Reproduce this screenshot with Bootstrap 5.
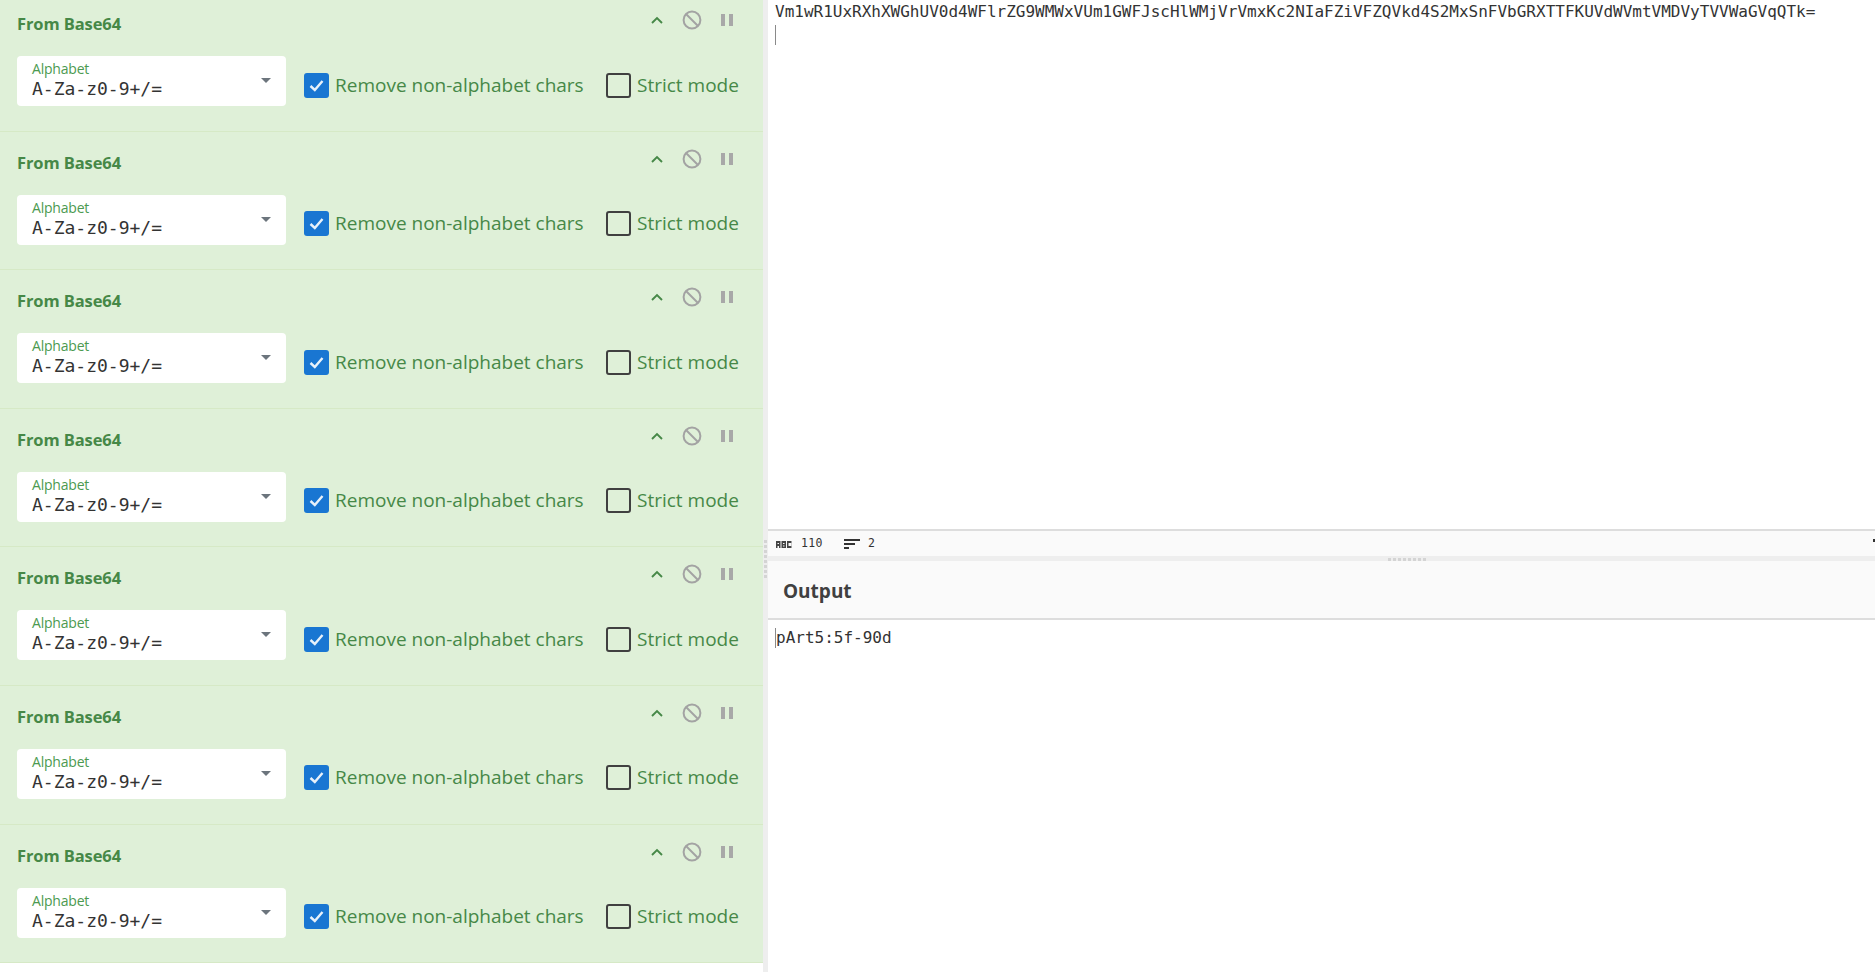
<!DOCTYPE html>
<html lang="en">
<head>
<meta charset="utf-8">
<title>CyberChef</title>
<link href="https://cdn.jsdelivr.net/npm/bootstrap@5.3.0/dist/css/bootstrap.min.css" rel="stylesheet">
<style>
html,body{height:100%;overflow:hidden;background:#fff}
body{font-family:"Open Sans","Noto Sans",sans-serif;color:#333}
.chef-app{height:972px;width:1875px}
.recipe-pane{width:763px;height:972px;overflow:hidden;flex:none}
.recipe-list{margin-top:-7px}
.op-row{height:138.6px;background:#dff0d8;border-bottom:1px solid #d6e9c6;color:#468847;padding:0 17px;flex:none}
.op-head{height:63px;padding-top:15px}
.op-title{font-size:16.5px;font-weight:700;letter-spacing:-.1px;color:#468847;line-height:24px;margin-top:4px}
.op-tools{margin-right:2px}
.op-tool{width:35px;height:24px}
.alpha-box{width:269px;height:50px;background:#fff;border-radius:4px;padding:4px 15px;position:relative;flex:none}
.alpha-label{font-size:14px;line-height:17px;color:#4c9a50;letter-spacing:-.2px}
.alpha-value{font-family:"DejaVu Sans Mono",monospace;font-size:18px;line-height:23px;color:#333}
.alpha-caret{position:absolute;right:15px;top:22px;width:0;height:0;border-left:5px solid transparent;border-right:5px solid transparent;border-top:5px solid #6c757d}
.tick-box{width:25px;height:25px;border-radius:3px;flex:none;margin-right:6px}
.tick-on{background:#1976d2}
.tick-off{border:2px solid #404040}
.tick-text{font-size:19px;line-height:25px;color:#468847;white-space:nowrap}
.tick-wrap{padding-top:8px}
.tick-wrap-a{margin-left:18px;width:302px}
.io-gutter{width:5px;background:#eee;flex:none}
.grip-v{width:3px;height:38px;margin-top:540px;margin-left:1px;background:repeating-linear-gradient(to bottom,#d4d4d4 0 3px,transparent 3px 5px)}
.io-main{min-width:0}
.input-area{height:529px;padding:2px 7px;overflow:hidden;flex:none}
.mono-line{font-family:"DejaVu Sans Mono",monospace;font-size:16px;line-height:19px;color:#333;white-space:nowrap;height:19px}
.txt-cursor{width:1px;height:20px;background:#8a8a8a;margin-top:4px}
.stat-bar{height:27px;background:#fafafa;border-top:2px solid #ddd;padding:1px 8px 0;font-family:"DejaVu Sans Mono",monospace;font-size:11.5px;color:#333;flex:none;overflow:hidden}
.stat-count{margin-left:9px;width:26px;letter-spacing:.3px}
.stat-lines{margin-left:17px}
.stat-speck{width:2px;height:3px;background:#333;margin-left:auto;margin-right:-8px;margin-top:-8px}
.sep-bar{height:5px;background:#eee;flex:none;padding-left:620px}
.grip-h{width:39px;height:3px;margin-top:2px;background:repeating-linear-gradient(to right,#d4d4d4 0 3px,transparent 3px 5px)}
.out-head{height:59px;background:#fafafa;border-bottom:2px solid #ddd;padding:4px 0 0 15px;flex:none}
.out-title{font-size:19px;font-weight:700;color:#404040}
.output-area{padding:8px 7px}
.out-cursor{width:1px;height:20px;background:#8a8a8a;flex:none}
</style>
</head>
<body>
<div class="chef-app d-flex">
  <div class="recipe-pane">
    <div class="recipe-list d-flex flex-column">
      <div class="op-row d-flex flex-column">
        <div class="op-head d-flex justify-content-between align-items-start"><div class="op-title">From Base64</div><div class="op-tools d-flex">
          <div class="op-tool d-flex align-items-center justify-content-center"><svg width="14" height="10" viewBox="0 0 14 10"><path d="M2 8 L7 3 L12 8" fill="none" stroke="#468847" stroke-width="1.9"/></svg></div>
          <div class="op-tool d-flex align-items-center justify-content-center"><svg width="20" height="20" viewBox="0 0 20 20"><circle cx="10" cy="10" r="8.4" fill="none" stroke="#a3a3a3" stroke-width="2"/><path d="M4 4 L16 16" stroke="#a3a3a3" stroke-width="2"/></svg></div>
          <div class="op-tool d-flex align-items-center justify-content-center"><svg width="14" height="14" viewBox="0 0 14 14"><rect x="1" y="1" width="4" height="12" fill="#a8a8a8"/><rect x="9" y="1" width="4" height="12" fill="#a8a8a8"/></svg></div>
        </div></div>
        <div class="d-flex align-items-center">
          <div class="alpha-box"><div class="alpha-label">Alphabet</div><div class="alpha-value">A-Za-z0-9+/=</div><div class="alpha-caret"></div></div>
          <div class="d-flex align-items-center tick-wrap tick-wrap-a"><div class="tick-box tick-on d-flex align-items-center justify-content-center"><svg width="17" height="17" viewBox="0 0 17 17"><path d="M2.5 9 L6.8 13 L14.5 4" fill="none" stroke="#e8f1fa" stroke-width="2.4"/></svg></div><div class="tick-text">Remove non-alphabet chars</div></div>
          <div class="d-flex align-items-center tick-wrap"><div class="tick-box tick-off"></div><div class="tick-text">Strict mode</div></div>
        </div>
      </div>
      <div class="op-row d-flex flex-column">
        <div class="op-head d-flex justify-content-between align-items-start"><div class="op-title">From Base64</div><div class="op-tools d-flex">
          <div class="op-tool d-flex align-items-center justify-content-center"><svg width="14" height="10" viewBox="0 0 14 10"><path d="M2 8 L7 3 L12 8" fill="none" stroke="#468847" stroke-width="1.9"/></svg></div>
          <div class="op-tool d-flex align-items-center justify-content-center"><svg width="20" height="20" viewBox="0 0 20 20"><circle cx="10" cy="10" r="8.4" fill="none" stroke="#a3a3a3" stroke-width="2"/><path d="M4 4 L16 16" stroke="#a3a3a3" stroke-width="2"/></svg></div>
          <div class="op-tool d-flex align-items-center justify-content-center"><svg width="14" height="14" viewBox="0 0 14 14"><rect x="1" y="1" width="4" height="12" fill="#a8a8a8"/><rect x="9" y="1" width="4" height="12" fill="#a8a8a8"/></svg></div>
        </div></div>
        <div class="d-flex align-items-center">
          <div class="alpha-box"><div class="alpha-label">Alphabet</div><div class="alpha-value">A-Za-z0-9+/=</div><div class="alpha-caret"></div></div>
          <div class="d-flex align-items-center tick-wrap tick-wrap-a"><div class="tick-box tick-on d-flex align-items-center justify-content-center"><svg width="17" height="17" viewBox="0 0 17 17"><path d="M2.5 9 L6.8 13 L14.5 4" fill="none" stroke="#e8f1fa" stroke-width="2.4"/></svg></div><div class="tick-text">Remove non-alphabet chars</div></div>
          <div class="d-flex align-items-center tick-wrap"><div class="tick-box tick-off"></div><div class="tick-text">Strict mode</div></div>
        </div>
      </div>
      <div class="op-row d-flex flex-column">
        <div class="op-head d-flex justify-content-between align-items-start"><div class="op-title">From Base64</div><div class="op-tools d-flex">
          <div class="op-tool d-flex align-items-center justify-content-center"><svg width="14" height="10" viewBox="0 0 14 10"><path d="M2 8 L7 3 L12 8" fill="none" stroke="#468847" stroke-width="1.9"/></svg></div>
          <div class="op-tool d-flex align-items-center justify-content-center"><svg width="20" height="20" viewBox="0 0 20 20"><circle cx="10" cy="10" r="8.4" fill="none" stroke="#a3a3a3" stroke-width="2"/><path d="M4 4 L16 16" stroke="#a3a3a3" stroke-width="2"/></svg></div>
          <div class="op-tool d-flex align-items-center justify-content-center"><svg width="14" height="14" viewBox="0 0 14 14"><rect x="1" y="1" width="4" height="12" fill="#a8a8a8"/><rect x="9" y="1" width="4" height="12" fill="#a8a8a8"/></svg></div>
        </div></div>
        <div class="d-flex align-items-center">
          <div class="alpha-box"><div class="alpha-label">Alphabet</div><div class="alpha-value">A-Za-z0-9+/=</div><div class="alpha-caret"></div></div>
          <div class="d-flex align-items-center tick-wrap tick-wrap-a"><div class="tick-box tick-on d-flex align-items-center justify-content-center"><svg width="17" height="17" viewBox="0 0 17 17"><path d="M2.5 9 L6.8 13 L14.5 4" fill="none" stroke="#e8f1fa" stroke-width="2.4"/></svg></div><div class="tick-text">Remove non-alphabet chars</div></div>
          <div class="d-flex align-items-center tick-wrap"><div class="tick-box tick-off"></div><div class="tick-text">Strict mode</div></div>
        </div>
      </div>
      <div class="op-row d-flex flex-column">
        <div class="op-head d-flex justify-content-between align-items-start"><div class="op-title">From Base64</div><div class="op-tools d-flex">
          <div class="op-tool d-flex align-items-center justify-content-center"><svg width="14" height="10" viewBox="0 0 14 10"><path d="M2 8 L7 3 L12 8" fill="none" stroke="#468847" stroke-width="1.9"/></svg></div>
          <div class="op-tool d-flex align-items-center justify-content-center"><svg width="20" height="20" viewBox="0 0 20 20"><circle cx="10" cy="10" r="8.4" fill="none" stroke="#a3a3a3" stroke-width="2"/><path d="M4 4 L16 16" stroke="#a3a3a3" stroke-width="2"/></svg></div>
          <div class="op-tool d-flex align-items-center justify-content-center"><svg width="14" height="14" viewBox="0 0 14 14"><rect x="1" y="1" width="4" height="12" fill="#a8a8a8"/><rect x="9" y="1" width="4" height="12" fill="#a8a8a8"/></svg></div>
        </div></div>
        <div class="d-flex align-items-center">
          <div class="alpha-box"><div class="alpha-label">Alphabet</div><div class="alpha-value">A-Za-z0-9+/=</div><div class="alpha-caret"></div></div>
          <div class="d-flex align-items-center tick-wrap tick-wrap-a"><div class="tick-box tick-on d-flex align-items-center justify-content-center"><svg width="17" height="17" viewBox="0 0 17 17"><path d="M2.5 9 L6.8 13 L14.5 4" fill="none" stroke="#e8f1fa" stroke-width="2.4"/></svg></div><div class="tick-text">Remove non-alphabet chars</div></div>
          <div class="d-flex align-items-center tick-wrap"><div class="tick-box tick-off"></div><div class="tick-text">Strict mode</div></div>
        </div>
      </div>
      <div class="op-row d-flex flex-column">
        <div class="op-head d-flex justify-content-between align-items-start"><div class="op-title">From Base64</div><div class="op-tools d-flex">
          <div class="op-tool d-flex align-items-center justify-content-center"><svg width="14" height="10" viewBox="0 0 14 10"><path d="M2 8 L7 3 L12 8" fill="none" stroke="#468847" stroke-width="1.9"/></svg></div>
          <div class="op-tool d-flex align-items-center justify-content-center"><svg width="20" height="20" viewBox="0 0 20 20"><circle cx="10" cy="10" r="8.4" fill="none" stroke="#a3a3a3" stroke-width="2"/><path d="M4 4 L16 16" stroke="#a3a3a3" stroke-width="2"/></svg></div>
          <div class="op-tool d-flex align-items-center justify-content-center"><svg width="14" height="14" viewBox="0 0 14 14"><rect x="1" y="1" width="4" height="12" fill="#a8a8a8"/><rect x="9" y="1" width="4" height="12" fill="#a8a8a8"/></svg></div>
        </div></div>
        <div class="d-flex align-items-center">
          <div class="alpha-box"><div class="alpha-label">Alphabet</div><div class="alpha-value">A-Za-z0-9+/=</div><div class="alpha-caret"></div></div>
          <div class="d-flex align-items-center tick-wrap tick-wrap-a"><div class="tick-box tick-on d-flex align-items-center justify-content-center"><svg width="17" height="17" viewBox="0 0 17 17"><path d="M2.5 9 L6.8 13 L14.5 4" fill="none" stroke="#e8f1fa" stroke-width="2.4"/></svg></div><div class="tick-text">Remove non-alphabet chars</div></div>
          <div class="d-flex align-items-center tick-wrap"><div class="tick-box tick-off"></div><div class="tick-text">Strict mode</div></div>
        </div>
      </div>
      <div class="op-row d-flex flex-column">
        <div class="op-head d-flex justify-content-between align-items-start"><div class="op-title">From Base64</div><div class="op-tools d-flex">
          <div class="op-tool d-flex align-items-center justify-content-center"><svg width="14" height="10" viewBox="0 0 14 10"><path d="M2 8 L7 3 L12 8" fill="none" stroke="#468847" stroke-width="1.9"/></svg></div>
          <div class="op-tool d-flex align-items-center justify-content-center"><svg width="20" height="20" viewBox="0 0 20 20"><circle cx="10" cy="10" r="8.4" fill="none" stroke="#a3a3a3" stroke-width="2"/><path d="M4 4 L16 16" stroke="#a3a3a3" stroke-width="2"/></svg></div>
          <div class="op-tool d-flex align-items-center justify-content-center"><svg width="14" height="14" viewBox="0 0 14 14"><rect x="1" y="1" width="4" height="12" fill="#a8a8a8"/><rect x="9" y="1" width="4" height="12" fill="#a8a8a8"/></svg></div>
        </div></div>
        <div class="d-flex align-items-center">
          <div class="alpha-box"><div class="alpha-label">Alphabet</div><div class="alpha-value">A-Za-z0-9+/=</div><div class="alpha-caret"></div></div>
          <div class="d-flex align-items-center tick-wrap tick-wrap-a"><div class="tick-box tick-on d-flex align-items-center justify-content-center"><svg width="17" height="17" viewBox="0 0 17 17"><path d="M2.5 9 L6.8 13 L14.5 4" fill="none" stroke="#e8f1fa" stroke-width="2.4"/></svg></div><div class="tick-text">Remove non-alphabet chars</div></div>
          <div class="d-flex align-items-center tick-wrap"><div class="tick-box tick-off"></div><div class="tick-text">Strict mode</div></div>
        </div>
      </div>
      <div class="op-row d-flex flex-column">
        <div class="op-head d-flex justify-content-between align-items-start"><div class="op-title">From Base64</div><div class="op-tools d-flex">
          <div class="op-tool d-flex align-items-center justify-content-center"><svg width="14" height="10" viewBox="0 0 14 10"><path d="M2 8 L7 3 L12 8" fill="none" stroke="#468847" stroke-width="1.9"/></svg></div>
          <div class="op-tool d-flex align-items-center justify-content-center"><svg width="20" height="20" viewBox="0 0 20 20"><circle cx="10" cy="10" r="8.4" fill="none" stroke="#a3a3a3" stroke-width="2"/><path d="M4 4 L16 16" stroke="#a3a3a3" stroke-width="2"/></svg></div>
          <div class="op-tool d-flex align-items-center justify-content-center"><svg width="14" height="14" viewBox="0 0 14 14"><rect x="1" y="1" width="4" height="12" fill="#a8a8a8"/><rect x="9" y="1" width="4" height="12" fill="#a8a8a8"/></svg></div>
        </div></div>
        <div class="d-flex align-items-center">
          <div class="alpha-box"><div class="alpha-label">Alphabet</div><div class="alpha-value">A-Za-z0-9+/=</div><div class="alpha-caret"></div></div>
          <div class="d-flex align-items-center tick-wrap tick-wrap-a"><div class="tick-box tick-on d-flex align-items-center justify-content-center"><svg width="17" height="17" viewBox="0 0 17 17"><path d="M2.5 9 L6.8 13 L14.5 4" fill="none" stroke="#e8f1fa" stroke-width="2.4"/></svg></div><div class="tick-text">Remove non-alphabet chars</div></div>
          <div class="d-flex align-items-center tick-wrap"><div class="tick-box tick-off"></div><div class="tick-text">Strict mode</div></div>
        </div>
      </div>
    </div>
  </div>
  <div class="io-gutter"><div class="grip-v"></div></div>
  <div class="io-main flex-grow-1 d-flex flex-column">
    <div class="input-area">
      <div class="mono-line">Vm1wR1UxRXhXWGhUV0d4WFlrZG9WMWxVUm1GWFJscHlWMjVrVmxKc2NIaFZiVFZQVkd4S2MxSnFVbGRXTTFKUVdWVmtVMDVyTVVWaGVqQTk=</div>
      <div class="txt-cursor"></div>
    </div>
    <div class="stat-bar d-flex align-items-center">
      <svg width="16" height="9" viewBox="0 0 16 9"><rect x="0" y="1" width="4.5" height="7" fill="#444"/><rect x="5.5" y="1" width="4.5" height="7" fill="#444"/><rect x="11" y="1" width="4.5" height="7" fill="#444"/><rect x="1.5" y="3" width="1.5" height="1" fill="#fafafa"/><rect x="1.5" y="6" width="1.5" height="2" fill="#fafafa"/><rect x="7" y="3" width="1.5" height="1" fill="#fafafa"/><rect x="7" y="5.5" width="1.5" height="1" fill="#fafafa"/><rect x="12.5" y="3" width="3" height="3" fill="#fafafa"/></svg>
      <span class="stat-count">110</span>
      <svg class="stat-lines" width="16" height="11" viewBox="0 0 16 11"><rect x="0" y="0" width="16" height="2" fill="#333"/><rect x="0" y="4" width="11" height="2" fill="#333"/><rect x="0" y="8" width="5" height="2" fill="#333"/></svg>
      <span class="ms-2">2</span>
      <div class="stat-speck"></div>
    </div>
    <div class="sep-bar"><div class="grip-h"></div></div>
    <div class="out-head d-flex align-items-center"><div class="out-title">Output</div></div>
    <div class="output-area d-flex">
      <div class="out-cursor"></div>
      <div class="mono-line">pArt5:5f-90d</div>
    </div>
  </div>
</div>
<script src="https://cdn.jsdelivr.net/npm/bootstrap@5.3.0/dist/js/bootstrap.bundle.min.js"></script>
</body>
</html>
